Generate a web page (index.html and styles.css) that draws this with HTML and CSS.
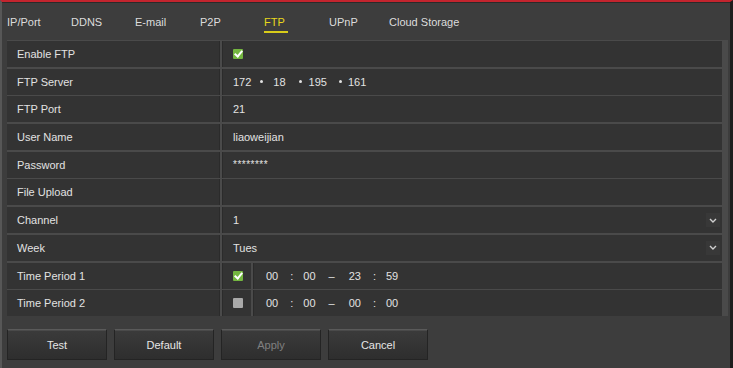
FILE: index.html
```html
<!DOCTYPE html>
<html>
<head>
<meta charset="utf-8">
<link rel="stylesheet" href="styles.css">
</head>
<body>
<div class="frame">
  <div class="tabs">
    <span class="tab w64">IP/Port</span>
    <span class="tab w64">DDNS</span>
    <span class="tab w65">E-mail</span>
    <span class="tab w64">P2P</span>
    <span class="tab w65 active">FTP</span>
    <span class="tab w60">UPnP</span>
    <span class="tab">Cloud Storage</span>
  </div>
  <div class="table">
    <div class="row"><div class="label">Enable FTP</div><div class="value"><span class="cb on"></span></div></div>
    <div class="row"><div class="label">FTP Server</div><div class="value ip"><span class="oct">172</span><span class="dot d1"></span><span class="oct">18</span><span class="dot d2"></span><span class="oct">195</span><span class="dot d3"></span><span class="oct">161</span></div></div>
    <div class="row"><div class="label">FTP Port</div><div class="value">21</div></div>
    <div class="row"><div class="label">User Name</div><div class="value">liaoweijian</div></div>
    <div class="row"><div class="label">Password</div><div class="value pw">********</div></div>
    <div class="row"><div class="label">File Upload</div><div class="value"></div></div>
    <div class="row"><div class="label">Channel</div><div class="value sel"><span>1</span><span class="arrow"><svg width="8" height="5" viewBox="0 0 8 5"><path d="M1 1 L4 4 L7 1" fill="none" stroke="#cfcfcf" stroke-width="1.4"/></svg></span></div></div>
    <div class="row"><div class="label">Week</div><div class="value sel"><span>Tues</span><span class="arrow"><svg width="8" height="5" viewBox="0 0 8 5"><path d="M1 1 L4 4 L7 1" fill="none" stroke="#cfcfcf" stroke-width="1.4"/></svg></span></div></div>
    <div class="row"><div class="label">Time Period 1</div><div class="value cbcell"><span class="cb on"></span></div><div class="value time"><span>00</span><span class="c">:</span><span>00</span><span class="d">–</span><span>23</span><span class="c">:</span><span>59</span></div></div>
    <div class="row"><div class="label">Time Period 2</div><div class="value cbcell"><span class="cb off"></span></div><div class="value time"><span>00</span><span class="c">:</span><span>00</span><span class="d">–</span><span>00</span><span class="c">:</span><span>00</span></div></div>
  </div>
  <div class="buttons">
    <button class="btn">Test</button>
    <button class="btn">Default</button>
    <button class="btn disabled">Apply</button>
    <button class="btn">Cancel</button>
  </div>
</div>
</body>
</html>
```
FILE: styles.css
```css
html, body {
  margin: 0;
  padding: 0;
  width: 733px;
  height: 368px;
  overflow: hidden;
  background: #3d3d3d;
  font-family: "Liberation Sans", Arial, sans-serif;
  font-size: 11px;
  color: #e2e2e2;
}
.frame {
  box-sizing: border-box;
  width: 733px;
  height: 368px;
  border-top: 2px solid #c3242e;
  border-left: 2px solid #575757;
  border-right: 3px solid #1e1e1e;
  background: #3d3d3d;
  padding-left: 5px;
  box-shadow: inset 0 1px 0 #2a2a2a;
}
.tabs {
  display: flex;
  height: 36px;
  align-items: flex-start;
  padding-top: 13px;
  box-sizing: border-box;
}
.tab {
  display: block;
  line-height: 14px;
  color: #dcdcdc;
}
.w64 { width: 64px; }
.w65 { width: 65px; }
.w60 { width: 60px; }
.tab.active {
  color: #e8d81c;
}
.tab.active::after {
  content: "";
  display: block;
  width: 24px;
  height: 2px;
  margin-top: 2px;
  background: #d8cc1a;
}
.table {
  width: 715px;
  margin-top: 2px;
  display: flex;
  flex-direction: column;
  gap: 1.7px;
  background: #4a4a4a;
  padding-top: 1px;
  padding-right: 6px;
}
.row {
  display: flex;
  height: 26px;
  gap: 2px;
}
.label {
  width: 202px;
  padding-left: 10px;
  background: #333333;
  line-height: 26px;
  color: #e2e2e2;
  border-right: 1px solid #2b2b2b;
}
.value {
  flex: 1;
  background: #333333;
  line-height: 26px;
  padding-left: 10px;
  display: flex;
  align-items: center;
  border-left: 1px solid #2b2b2b;
  color: #e2e2e2;
}
.cbcell {
  flex: 0 0 18px;
}
.time {
  padding-left: 12px;
}
.time span { display: inline-block; color: #e2e2e2; }
.time .c { margin: 0 10px 0 12px; }
.time .d { margin: 0 14px 0 13px; }
.cb {
  display: inline-block;
  width: 10px;
  height: 10px;
  border-radius: 1px;
  position: relative;
}
.cb.on {
  background: #74b640;
}
.cb.on::after {
  content: "";
  position: absolute;
  left: 3px;
  top: 0px;
  width: 3px;
  height: 6px;
  border: solid #ffffff;
  border-width: 0 2px 2px 0;
  transform: rotate(40deg);
}
.cb.off {
  background: #a9a9a9;
}
.ip .oct { display: inline-block; }
.ip .dot {
  display: inline-block;
  width: 3px;
  height: 3px;
  border-radius: 50%;
  background: #e2e2e2;
}
.ip .d1 { margin: 0 10px 0 9px; }
.ip .d2 { margin: 0 7px 0 13px; }
.ip .d3 { margin: 0 6px 0 12px; }
.pw { letter-spacing: 0.5px; font-size: 10px; }
.sel { justify-content: space-between; padding-right: 2px; }
.arrow {
  width: 14px;
  height: 14px;
  display: flex;
  align-items: center;
  justify-content: center;
  background: #383838;
}
.buttons {
  display: flex;
  gap: 7px;
  margin-top: 13px;
}
.btn {
  width: 100px;
  height: 31px;
  font-family: "Liberation Sans", Arial, sans-serif;
  font-size: 11px;
  color: #e6e6e6;
  background: linear-gradient(#3b3b3b, #2e2e2e);
  border: 1px solid #242424;
  border-top-color: #5a5a5a;
  box-shadow: inset 0 1px 0 #4a4a4a;
  padding: 0;
}
.btn.disabled { color: #808080; }
```
